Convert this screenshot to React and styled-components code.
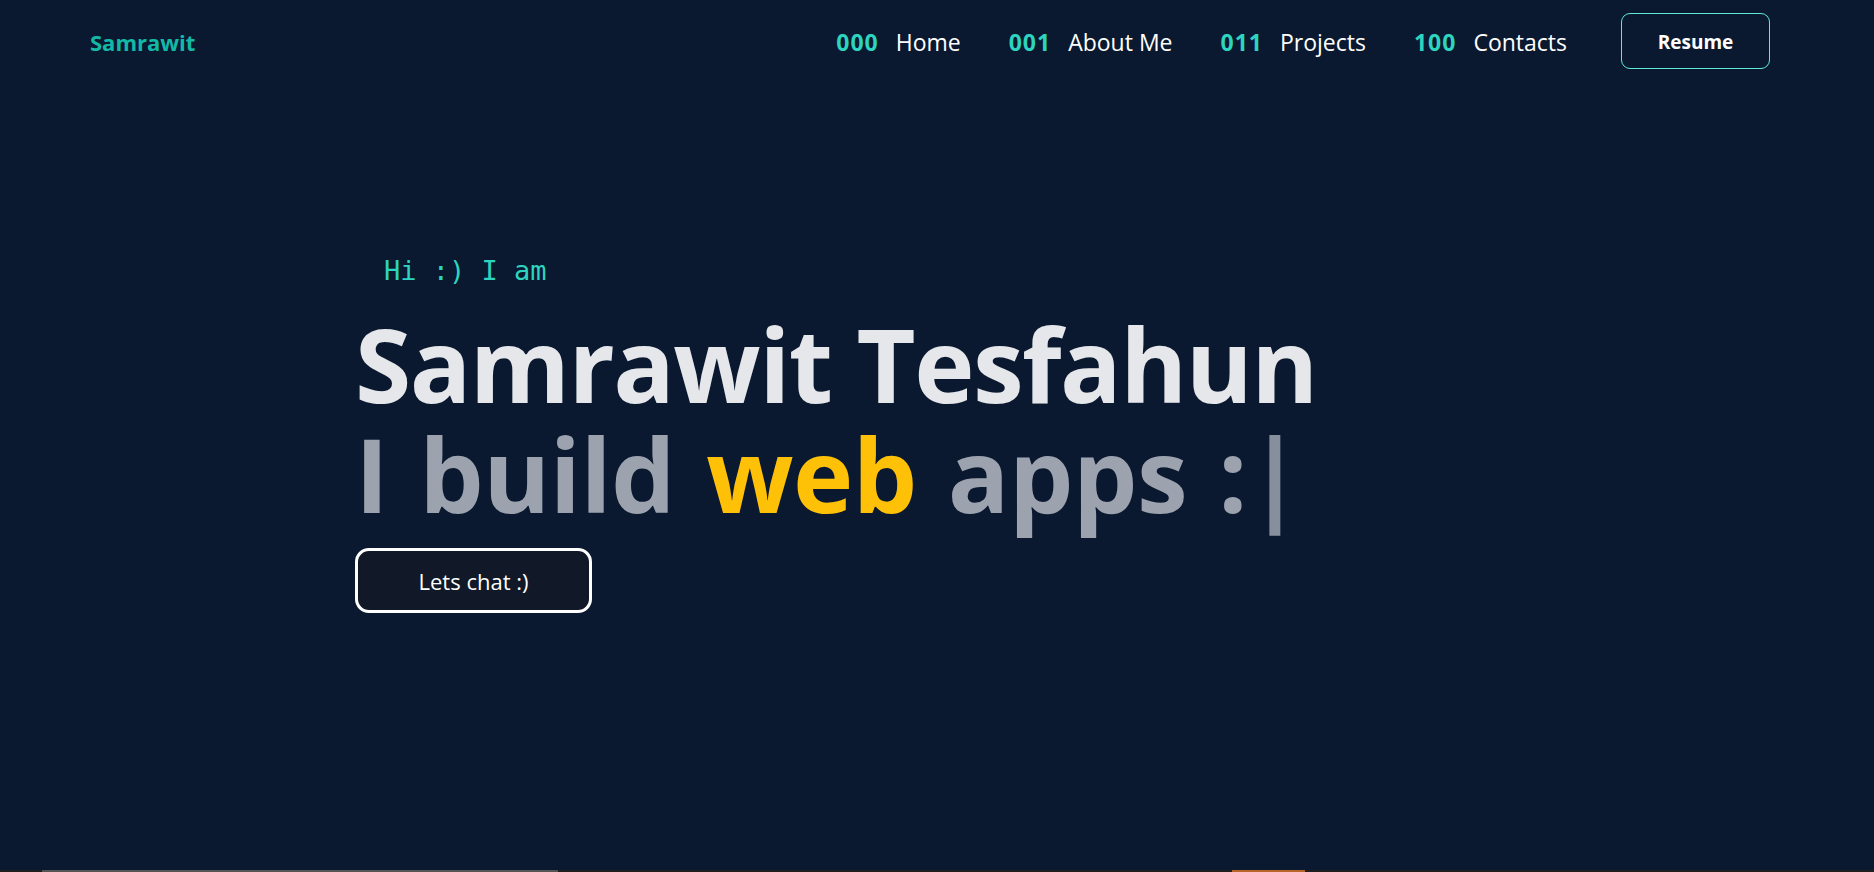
import React from 'react';
import styled, { createGlobalStyle } from 'styled-components';

const GlobalStyle = createGlobalStyle`
  * { box-sizing: border-box; }
  html, body { margin: 0; padding: 0; background: #0a192f; }
  body {
    font-family: "Open Sans", "Noto Sans", sans-serif;
    color: #ffffff;
    overflow: hidden;
  }
`;

const Page = styled.div`
  height: 872px;
  display: flex;
  flex-direction: column;
  background: #0a192f;
  overflow: hidden;
`;

const Nav = styled.header`
  display: flex;
  align-items: center;
  justify-content: space-between;
  height: 82px;
  padding: 0 104px 0 90px;
  flex-shrink: 0;
`;

const Logo = styled.a`
  font-size: 22px;
  font-weight: 700;
  color: #14b8a6;
  text-decoration: none;
  padding-top: 1px;
`;

const NavList = styled.nav`
  display: flex;
  align-items: center;
`;

const NavItem = styled.a`
  display: flex;
  align-items: center;
  gap: 17px;
  font-size: 23px;
  color: #ffffff;
  margin-right: 48px;
  text-decoration: none;
  padding-top: 2px;
`;

const NavNum = styled.span`
  color: #2dd4bf;
  font-weight: 700;
  letter-spacing: 1px;
`;

const ResumeButton = styled.button`
  margin-left: 6px;
  width: 149px;
  height: 56px;
  padding-top: 3px;
  border: 1px solid #5eead4;
  border-radius: 9px;
  background: transparent;
  color: #ffffff;
  font-family: "Open Sans", sans-serif;
  font-weight: 700;
  font-size: 19px;
  cursor: pointer;
`;

const Hero = styled.section`
  flex: 1;
  display: flex;
  flex-direction: column;
  align-items: flex-start;
  padding: 171px 0 0 355px;
`;

const Greeting = styled.p`
  margin: 0 0 20px 29px;
  font-family: "DejaVu Sans Mono", "Liberation Mono", monospace;
  font-size: 27px;
  line-height: 36px;
  color: #2dd4bf;
  white-space: pre;
`;

const Title = styled.h1`
  margin: 0;
  font-size: 102px;
  line-height: 110px;
  font-weight: 700;
  color: #e5e7eb;
  letter-spacing: -1.5px;
  white-space: nowrap;
`;

const Subtitle = styled(Title).attrs({ as: 'h2' })`
  color: #9ca3af;
  letter-spacing: -0.5px;
  word-spacing: 5px;
`;

const Highlight = styled.span`
  color: #ffc107;
`;

const Cursor = styled.span`
  color: #878f9c;
`;

const ChatButton = styled.button`
  margin-top: 19px;
  width: 237px;
  height: 65px;
  border: 3px solid #ffffff;
  border-radius: 14px;
  background: #111827;
  color: #ffffff;
  font-family: "Open Sans", sans-serif;
  font-size: 22px;
  cursor: pointer;
`;

const Strip = styled.div`
  flex-shrink: 0;
  height: 2px;
  display: grid;
  grid-template-columns: 42px 516px 674px 73px 1fr;
  background: #1f1f1f;
`;

const StripPart = styled.div`
  background: ${(p) => p.$color || 'transparent'};
`;

const links = [
  ['000', 'Home'],
  ['001', 'About Me'],
  ['011', 'Projects'],
  ['100', 'Contacts'],
];

export default function App() {
  return (
    <>
      <GlobalStyle />
      <Page>
        <Nav>
          <Logo href="#">Samrawit</Logo>
          <NavList>
            {links.map(([n, l]) => (
              <NavItem key={n} href="#">
                <NavNum>{n}</NavNum>
                <span>{l}</span>
              </NavItem>
            ))}
            <ResumeButton>Resume</ResumeButton>
          </NavList>
        </Nav>
        <Hero>
          <Greeting>Hi :) I am</Greeting>
          <Title>Samrawit Tesfahun</Title>
          <Subtitle>
            I build <Highlight>web</Highlight> apps :<Cursor>|</Cursor>
          </Subtitle>
          <ChatButton>Lets chat :)</ChatButton>
        </Hero>
        <Strip>
          <StripPart />
          <StripPart $color="#555555" />
          <StripPart />
          <StripPart $color="#b8652a" />
          <StripPart />
        </Strip>
      </Page>
    </>
  );
}
